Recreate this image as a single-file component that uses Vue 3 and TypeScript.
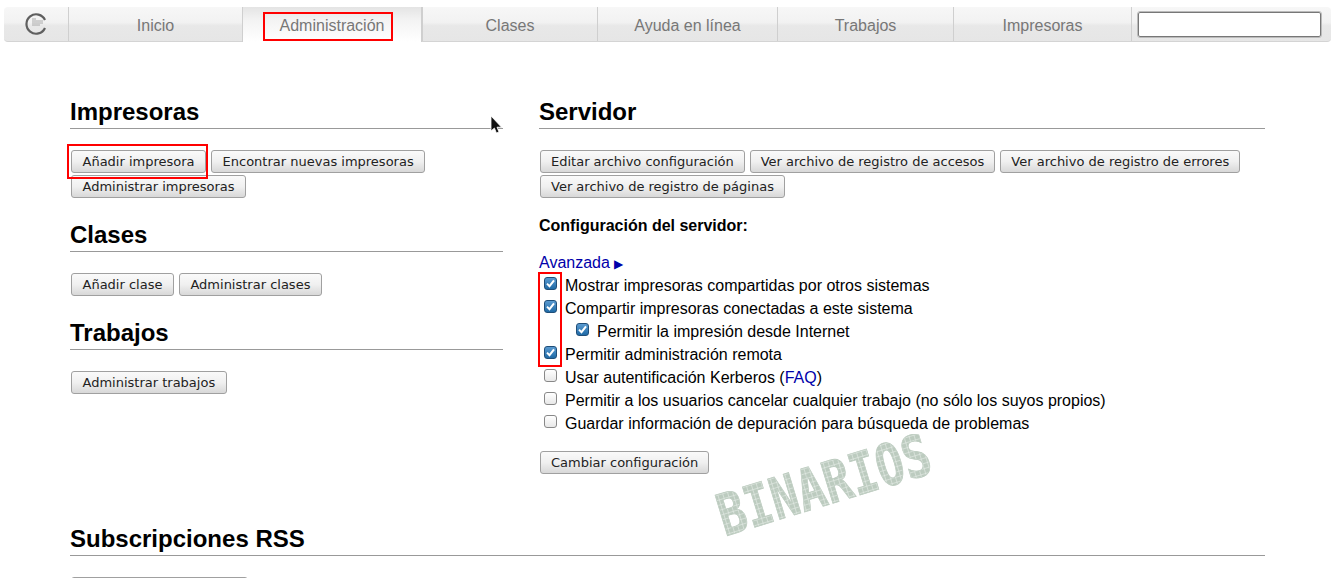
<script setup lang="ts">
const tabs = [
  { label: 'Inicio' },
  { label: 'Administración', active: true },
  { label: 'Clases' },
  { label: 'Ayuda en línea' },
  { label: 'Trabajos' },
  { label: 'Impresoras' },
]

const serverBtns = [
  'Editar archivo configuración',
  'Ver archivo de registro de accesos',
  'Ver archivo de registro de errores',
  'Ver archivo de registro de páginas',
]

const options = [
  { text: 'Mostrar impresoras compartidas por otros sistemas', on: true },
  { text: 'Compartir impresoras conectadas a este sistema', on: true },
  { text: 'Permitir la impresión desde Internet', on: true, sub: true },
  { text: 'Permitir administración remota', on: true },
  { text: 'Usar autentificación Kerberos', on: false, faq: true },
  { text: 'Permitir a los usuarios cancelar cualquier trabajo (no sólo los suyos propios)', on: false },
  { text: 'Guardar información de depuración para búsqueda de problemas', on: false },
]
</script>

<template>
  <div class="page">
    <nav class="tabs">
      <div class="tab logo">
        <svg width="24" height="26" viewBox="0 0 24 26">
          <path d="M21 9A9.700 9.700 0 1 0 21 17" fill="none" stroke="#5f5f5f" stroke-width="2.200" />
          <path d="M8 8h4M8 10h11M8 12h11M8 14h8" stroke="#999" stroke-width=".8" />
        </svg>
      </div>
      <div v-for="t in tabs" :key="t.label" class="tab" :class="{ active: t.active }">
        <span class="tab-label">{{ t.label }}</span>
        <span v-if="t.active" class="mark mark-tab"></span>
      </div>
      <div class="tab search"><input type="text" /></div>
    </nav>

    <main class="content">
      <div class="cols">
        <div>
          <section>
            <h2>Impresoras</h2>
            <div class="btns">
              <span class="marked">
                <button>Añadir impresora</button>
                <span class="mark mark-btn"></span>
              </span>
              <button>Encontrar nuevas impresoras</button>
              <button>Administrar impresoras</button>
            </div>
          </section>
          <section class="next">
            <h2>Clases</h2>
            <div class="btns">
              <button>Añadir clase</button>
              <button>Administrar clases</button>
            </div>
          </section>
          <section class="next">
            <h2>Trabajos</h2>
            <div class="btns">
              <button>Administrar trabajos</button>
            </div>
          </section>
        </div>

        <div>
          <section>
            <h2>Servidor</h2>
            <div class="btns tight">
              <button v-for="b in serverBtns" :key="b">{{ b }}</button>
            </div>
            <p class="cfg-title">Configuración del servidor:</p>
            <p class="adv"><a>Avanzada</a> <span class="arrow">▶</span></p>
            <div class="opts">
              <span class="mark mark-checks"></span>
              <div v-for="o in options" :key="o.text" class="opt" :class="{ sub: o.sub }">
                <span class="check" :class="{ on: o.on }">
                  <svg v-if="o.on" width="11" height="11" viewBox="0 0 11 11">
                    <path d="M2 5.600 4.500 8.200 9 2.400" fill="none" stroke="#fff" stroke-width="2" />
                  </svg>
                </span>
                <span>{{ o.text }}<template v-if="o.faq"> (<a>FAQ</a>)</template></span>
              </div>
            </div>
            <div class="btns tight save"><button>Cambiar configuración</button></div>
          </section>
        </div>
      </div>

      <section class="rss">
        <h2>Subscripciones RSS</h2>
        <div class="btns"><button class="clipped"></button></div>
      </section>
    </main>

    <svg class="watermark" width="250" height="130" viewBox="0 0 250 130">
      <defs>
        <pattern id="brick" width="5" height="5" patternUnits="userSpaceOnUse">
          <rect width="5" height="5" fill="#bccbbf" />
          <path d="M0 .5h5M.5 0v5" stroke="#e6ece7" stroke-width=".6" />
        </pattern>
      </defs>
      <text
        x="125" y="82" text-anchor="middle" textLength="220" lengthAdjust="spacingAndGlyphs"
        transform="rotate(-17 125 65)" class="wm-text"
      >BINARIOS</text>
    </svg>

    <svg class="cursor" width="14" height="20" viewBox="0 0 14 20">
      <path d="M1 1v15l3.400-3 2 5 2.600-1-2-4.800h4.500z" fill="#111" stroke="#fff" stroke-width=".8" />
    </svg>
  </div>
</template>

<style scoped>
.page {
  position: relative;
  width: 1339px;
  height: 578px;
  overflow: hidden;
  padding-top: 7px;
  box-sizing: border-box;
  background: #fff;
  color: #000;
  font-family: "Liberation Sans", Arial, sans-serif;
  font-size: 16px;
}
.tabs {
  display: grid;
  grid-template-columns: 64px 174px 180px 175px 180px 176px 178px 200px;
  margin-left: 4px;
  width: 1327px;
  height: 35px;
  border-radius: 4px;
  background: linear-gradient(#f7f7f7, #f2f2f2 45%, #e8e8e8 55%, #e6e6e6);
  border-bottom: 1px solid #d4d4d4;
  box-sizing: border-box;
}
.tab {
  position: relative;
  display: flex;
  align-items: center;
  justify-content: center;
  border-left: 1px solid #cfcfcf;
  color: #777;
}
.tab:first-child { border-left: none; }
.tab.active {
  background: linear-gradient(#e4e4e4, #f4f4f4 40%, #fff);
  margin-bottom: -1px;
  border-right: 1px solid #cfcfcf;
}
.tab-label { position: relative; top: 2px; }
.tab.active .tab-label { top: 1px; }
.search { padding: 0 10px 0 6px; justify-content: flex-start; }
.search input {
  width: 183px;
  height: 25px;
  padding: 0;
  box-sizing: border-box;
  border: 1px solid #777;
  border-radius: 2px;
  outline: 1px solid #bbb;
  background: #fff;
}
.mark {
  position: absolute;
  box-sizing: border-box;
  border: 2px solid #f00;
  pointer-events: none;
}
.mark-tab { left: 20px; top: 5px; width: 130px; height: 29px; }
.marked { position: relative; display: inline-block; }
.mark-btn { left: -4px; top: -6px; width: 141px; height: 35px; }
.mark-checks { left: -1px; top: -2px; width: 24px; height: 95px; }

.content { padding: 56px 74px 0 70px; }
.cols {
  display: grid;
  grid-template-columns: 433px 726px;
  column-gap: 36px;
}
h2 {
  margin: 0;
  height: 30px;
  line-height: 28px;
  font-size: 24px;
  font-weight: bold;
  border-bottom: 1px solid #999;
  box-sizing: content-box;
}
.btns {
  display: flex;
  flex-wrap: wrap;
  gap: 2px 5px;
  margin: 21px 0 0 1px;
}
button {
  display: block;
  height: 23px;
  padding: 0 10.500px;
  font-family: "DejaVu Sans", sans-serif;
  font-size: 13px;
  color: #222;
  border: 1px solid #a0a0a0;
  border-radius: 3px;
  background: linear-gradient(#fafafa, #f0f0f0 50%, #d8d8d8);
  white-space: nowrap;
}
.tight button { padding: 0 10px; }
button.clipped { width: 177px; }
.next { margin-top: 23px; }
.cfg-title {
  margin: 16px 0 0;
  line-height: 23px;
  font-weight: bold;
}
.adv { margin: 14px 0 0; line-height: 23px; }
a { color: #0000aa; }
.arrow { color: #0000aa; font-size: 12px; }
.opts { position: relative; margin-top: -2px; }
.opt {
  display: flex;
  align-items: center;
  height: 23px;
  padding-left: 5px;
}
.opt.sub { padding-left: 37px; }
.check {
  flex: none;
  display: flex;
  align-items: center;
  justify-content: center;
  width: 13px;
  height: 13px;
  margin: -4px 8px 0 0;
  box-sizing: border-box;
  border: 1px solid #888;
  border-radius: 3px;
  background: linear-gradient(#fff, #e8e8e8);
}
.check.on {
  border-color: #1f4e79;
  background: linear-gradient(#5a9ad0, #1f6aa6);
}
.save { margin-top: 16px; }
.rss { margin-top: 51px; }
.watermark {
  position: absolute;
  left: 700px;
  top: 423px;
  overflow: visible;
}
.wm-text {
  font-family: "DejaVu Sans Mono", monospace;
  font-weight: bold;
  font-size: 58px;
  fill: url(#brick);
  stroke: #bccbbf;
  stroke-width: .8;
}
.cursor {
  position: absolute;
  left: 490px;
  top: 115px;
}
</style>

<style>
html, body { margin: 0; overflow: hidden; }
</style>
